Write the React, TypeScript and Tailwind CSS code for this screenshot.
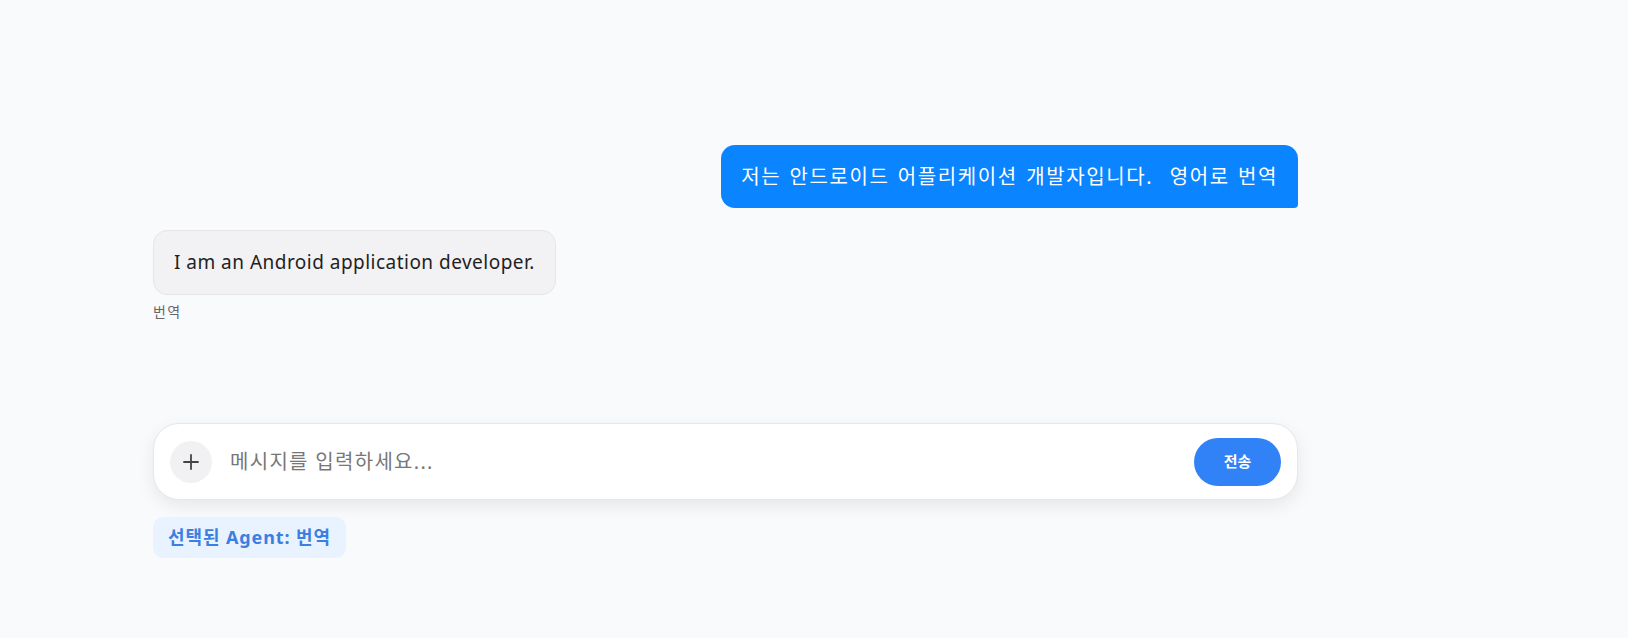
import { Plus } from "lucide-react";

const font = { fontFamily: '"Noto Sans", "Noto Sans CJK KR", sans-serif' };

export default function App() {
  return (
    <div className="min-h-screen w-full bg-[#f9fafc]" style={font}>
      <div className="w-[1145px] ml-[153px] pt-[145px] flex flex-col">
        <div className="flex justify-end">
          <div className="bg-[#0a84ff] text-white text-[20px] tracking-[0.08em] [word-spacing:1.5px] leading-[27px] rounded-[14px] rounded-br-[4px] px-[20px] py-[18px] whitespace-pre">
            저는 안드로이드 어플리케이션 개발자입니다.  영어로 번역
          </div>
        </div>
        <div className="mt-[22px] flex flex-col items-start">
          <div className="bg-[#f2f2f5] border border-[#e6e6ea] text-[#222] text-[19px] tracking-[0.025em] leading-[27px] rounded-[14px] px-[20px] py-[18px]">
            I am an Android application developer.
          </div>
          <div className="mt-[6px] text-[14px] tracking-[0.1em] text-[#666]">번역</div>
        </div>
        <div className="mt-[101px] h-[77px] bg-white border border-[#e5e7eb] rounded-[26px] shadow-[0_6px_18px_rgba(0,0,0,0.08)] flex items-center pl-[16px] pr-[16px]">
          <button className="w-[42px] h-[42px] rounded-full bg-[#f1f1f3] flex items-center justify-center text-[#444]">
            <Plus size={24} strokeWidth={1.8} />
          </button>
          <div className="ml-[18px] flex-1 text-[20px] tracking-[0.065em] text-[#777]">메시지를 입력하세요...</div>
          <button className="w-[87px] h-[48px] rounded-full bg-[#3182f6] text-white text-[15px] font-bold">
            전송
          </button>
        </div>
        <div className="mt-[17px] flex">
          <div className="h-[41px] px-[15px] flex items-center rounded-[10px] bg-[#e9f3ff] text-[#3d7fe0] text-[18px] tracking-[0.05em] font-bold">
            선택된 Agent: 번역
          </div>
        </div>
      </div>
    </div>
  );
}
